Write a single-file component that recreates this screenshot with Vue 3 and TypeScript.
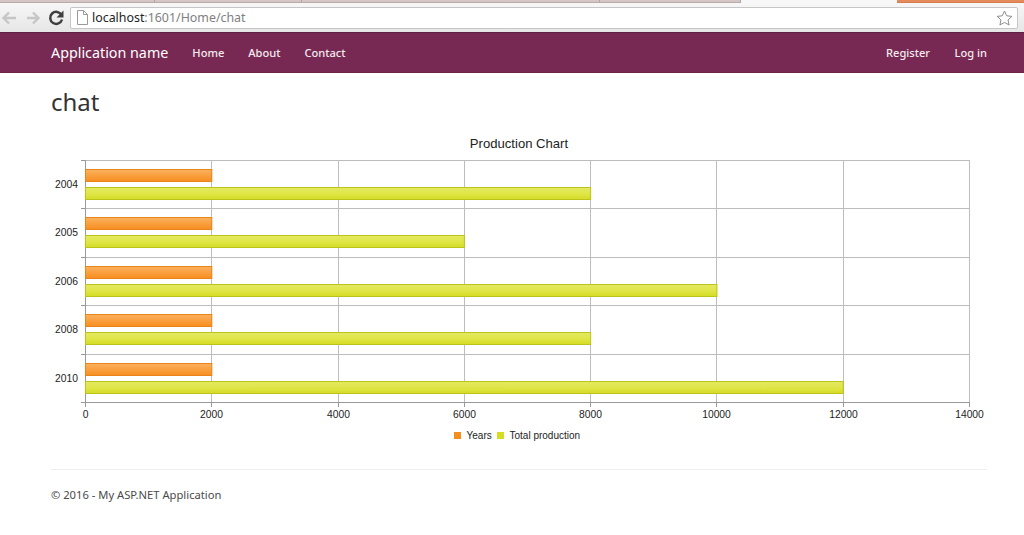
<script setup lang="ts">
const rows = [
  { year: '2004', years: 2000, total: 8000 },
  { year: '2005', years: 2000, total: 6000 },
  { year: '2006', years: 2000, total: 10000 },
  { year: '2008', years: 2000, total: 8000 },
  { year: '2010', years: 2000, total: 12000 },
]
const left = 85
const right = 969
const top = 160
const bottom = 402
const unit = (right - left) / 14000
const band = 48.5
const xTicks = [0, 2000, 4000, 6000, 8000, 10000, 12000, 14000]
const xOf = (v: number) => Math.round(left + v * unit) + 0.5
const yLines = Array.from({ length: rows.length + 1 }, (_, i) => Math.floor(top + i * band) + 0.5)
const bars = rows.map((r, i) => {
  const y = Math.floor(top + i * band)
  return { ...r, y, w1: r.years * unit, w2: r.total * unit }
})
</script>

<template>
  <div class="page">
    <div class="tabstrip">
      <span class="tab t1"></span>
      <span class="tab t2"></span>
      <span class="tab t3"></span>
      <span class="tab t3b"></span>
      <span class="tab t-active"></span>
      <span class="tab t4"></span>
    </div>
    <div class="toolbar">
      <svg class="navicons" width="68" height="22" viewBox="0 0 68 22">
        <path d="M15 11H3.500M8 5.500 2.500 11 8 16.500" fill="none" stroke="#c6c6c6" stroke-width="2.400" />
        <path d="M26 11h11.500M32 5.500l5.500 5.500-5.500 5.500" fill="none" stroke="#c6c6c6" stroke-width="2.400" />
        <path d="M60.500 8a6 6 0 1 0 .5 4.500" fill="none" stroke="#3f3f3f" stroke-width="2.500" />
        <path d="M62.500 3.500v7h-7z" fill="#3f3f3f" />
      </svg>
      <div class="omnibox">
        <svg width="12" height="15" viewBox="0 0 12 15" class="docicon">
          <path d="M1.500.5h6l4 4v10h-10zM7.500.5v4h4" fill="#fff" stroke="#9a9a9a" />
        </svg>
        <span class="host">localhost</span><span class="path">:1601/Home/chat</span>
        <svg class="star" width="17" height="16" viewBox="0 0 17 16">
          <path d="M8.500 1l2.200 4.800 5.200.6-3.900 3.500 1.100 5.100-4.600-2.600L3.900 15 5 9.900 1.100 6.400l5.200-.6z" fill="none" stroke="#8c8c8c" />
        </svg>
      </div>
    </div>

    <nav class="navbar">
      <div class="nav-left">
        <a class="brand">Application name</a>
        <a class="link">Home</a>
        <a class="link">About</a>
        <a class="link">Contact</a>
      </div>
      <div class="nav-right">
        <a class="link">Register</a>
        <a class="link">Log in</a>
      </div>
    </nav>

    <main class="content">
      <h2 class="title">chat</h2>
      <svg class="chart" width="1024" height="316" viewBox="0 130 1024 316">
        <defs>
          <linearGradient id="orangeBar" x1="0" y1="0" x2="0" y2="1">
            <stop offset="0" stop-color="#fbb25f" />
            <stop offset="0.55" stop-color="#fa9d3c" />
            <stop offset="1" stop-color="#f68e1f" />
          </linearGradient>
          <linearGradient id="yellowBar" x1="0" y1="0" x2="0" y2="1">
            <stop offset="0" stop-color="#e4ea62" />
            <stop offset="0.55" stop-color="#dfe544" />
            <stop offset="1" stop-color="#d4dc24" />
          </linearGradient>
        </defs>
        <text class="chart-title" x="519" y="148" text-anchor="middle">Production Chart</text>

        <line v-for="y in yLines.slice(0, -1)" :key="'h' + y" :x1="left" :x2="right + 0.5" :y1="y" :y2="y" class="grid" />
        <line v-for="v in xTicks.slice(1)" :key="'v' + v" :x1="xOf(v)" :x2="xOf(v)" :y1="top" :y2="bottom" class="grid" />

        <line :x1="left + 0.5" :x2="left + 0.5" :y1="top" :y2="bottom + 5" class="axis" />
        <line :x1="left - 4" :x2="right + 0.5" :y1="bottom + 0.5" :y2="bottom + 0.5" class="axis" />
        <line v-for="y in yLines" :key="'yt' + y" :x1="left - 4" :x2="left" :y1="y" :y2="y" class="axis" />
        <line v-for="v in xTicks" :key="'xt' + v" :x1="xOf(v)" :x2="xOf(v)" :y1="bottom" :y2="bottom + 5" class="axis" />

        <g v-for="b in bars" :key="b.year">
          <text class="tick" x="78" :y="b.y + 28" text-anchor="end">{{ b.year }}</text>
          <rect :x="left + 0.5" :y="b.y + 9.5" :width="b.w1" height="12" fill="url(#orangeBar)" stroke="#e8841a" />
          <rect :x="left + 0.5" :y="b.y + 27.5" :width="b.w2" height="12" fill="url(#yellowBar)" stroke="#bcc41c" />
        </g>

        <text v-for="v in xTicks" :key="'xl' + v" class="tick" :x="xOf(v)" y="418" text-anchor="middle">{{ v }}</text>

        <rect x="454" y="432" width="7" height="7" fill="#f68e1f" />
        <text class="tick legend" x="466.500" y="438.500">Years</text>
        <rect x="497" y="432" width="7" height="7" fill="#d4dc24" />
        <text class="tick legend" x="509.500" y="438.500">Total production</text>
      </svg>
      <hr class="rule" />
      <footer class="footer">© 2016 - My ASP.NET Application</footer>
    </main>
  </div>
</template>

<style>
html, body { margin: 0; background: #fff; }
</style>

<style scoped>
.page {
  width: 1024px;
  height: 535px;
  overflow: hidden;
  font-family: "Noto Sans", "Open Sans", sans-serif;
  background: #fff;
}
.tabstrip {
  height: 3px;
  background: #f4f4f4;
  display: flex;
}
.tab { display: block; height: 3px; box-sizing: border-box; background: #d3c6c5; border-bottom: 1px solid #b8aaaa; border-right: 1px solid #b3a5a5; }
.t1 { width: 155px; }
.t2 { width: 147px; }
.t3 { width: 298px; }
.t3b { width: 141px; }
.t-active { width: 156px; background: #f7f7f7; border: 0; }
.t4 { flex: 1; background: #e58a5c; border: 0; border-bottom: 1px solid #d97c4c; }
.toolbar {
  height: 29px;
  box-sizing: border-box;
  display: flex;
  align-items: center;
  background: linear-gradient(#f7f7f7, #e6e6e6);
  padding: 0 6px 0 1px;
  gap: 1px;
}
.navicons { flex: none; }
.omnibox {
  flex: 1;
  height: 22px;
  box-sizing: border-box;
  border: 1px solid #c6c6c6;
  border-radius: 2px;
  background: #fff;
  display: flex;
  align-items: center;
  padding: 0 4px 0 5px;
  font-size: 12.400px;
}
.docicon { margin-right: 4px; flex: none; }
.host { color: #222; }
.path { color: #808080; }
.star { margin-left: auto; flex: none; }
.navbar {
  height: 41px;
  box-sizing: border-box;
  background: #772953;
  border-top: 1px solid #5f2142;
  border-bottom: 1px solid #6a2549;
  display: flex;
  align-items: center;
  justify-content: space-between;
  padding: 0 37px 0 51px;
  color: #fff;
}
.nav-left, .nav-right { display: flex; align-items: center; }
.nav-left { gap: 24px; }
.nav-right { gap: 24.500px; }
.brand { font-size: 14.300px; color: #fff; }
.link { font-size: 11.100px; color: #f5eaef; font-weight: 500; position: relative; top: -0.500px; }
.title {
  margin: 14px 0 0 51px;
  height: 43px;
  font-size: 24px;
  line-height: 30px;
  font-weight: 400;
  color: #333;
}
.chart { display: block; }
.chart-title { font: 13.100px "Liberation Sans", Arial, sans-serif; fill: #222; }
.tick { font: 10.300px "Liberation Sans", Arial, sans-serif; fill: #222; }
.legend { font-size: 10px; }
.grid { stroke: #bdbdbd; stroke-width: 1; }
.axis { stroke: #999; stroke-width: 1; }
.rule {
  margin: 23px 37px 0 51px;
  border: 0;
  border-top: 1px solid #eee;
}
.footer {
  margin: 17px 0 0 51px;
  font-size: 11.200px;
  color: #4a4a4a;
}
</style>
